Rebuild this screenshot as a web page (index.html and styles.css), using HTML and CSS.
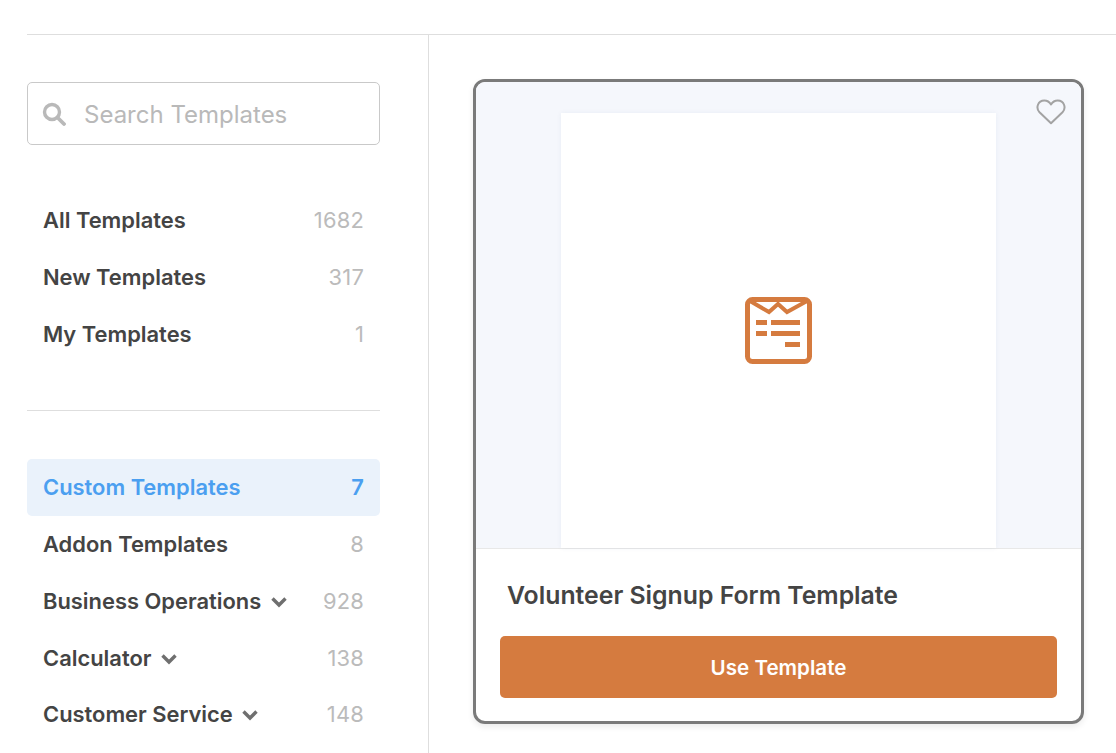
FILE: index.html
```html
<!doctype html>
<html>

<head>
    <link rel="stylesheet" href="styles.css">
</head>

<body>
    <div class="topbar"></div>
    <div class="page">
        <div class="sidebar">
            <div class="search">
                <svg class="search-icon" width="24" height="24" viewBox="0 0 24 24">
                    <circle cx="10" cy="10" r="7.5" fill="none" stroke="#b9b9b9" stroke-width="3.4" />
                    <path d="M15.5 15.5L22 22" fill="none" stroke="#b9b9b9" stroke-width="3.8" stroke-linecap="round" />
                </svg>
                <span class="search-text">Search Templates</span>
            </div>
            <div class="list list-first">
                <div class="row"><span class="name">All Templates</span><span class="num">1682</span></div>
                <div class="row"><span class="name">New Templates</span><span class="num">317</span></div>
                <div class="row"><span class="name">My Templates</span><span class="num">1</span></div>
            </div>
            <div class="list list-second">
                <div class="row active"><span class="name">Custom Templates</span><span class="num">7</span></div>
                <div class="row"><span class="name">Addon Templates</span><span class="num">8</span></div>
                <div class="row">
                    <span class="name">Business Operations
                        <svg class="chev" width="18" height="12" viewBox="0 0 18 12"><path d="M2.5 2.5L9 9l6.500-6.500" /></svg>
                    </span>
                    <span class="num">928</span>
                </div>
                <div class="row">
                    <span class="name">Calculator
                        <svg class="chev" width="18" height="12" viewBox="0 0 18 12"><path d="M2.5 2.5L9 9l6.500-6.500" /></svg>
                    </span>
                    <span class="num">138</span>
                </div>
                <div class="row">
                    <span class="name">Customer Service
                        <svg class="chev" width="18" height="12" viewBox="0 0 18 12"><path d="M2.5 2.5L9 9l6.500-6.500" /></svg>
                    </span>
                    <span class="num">148</span>
                </div>
            </div>
        </div>
        <div class="main">
            <div class="card">
                <div class="preview">
                    <div class="paper">
                        <svg width="67" height="67" viewBox="0 0 67 67">
                            <rect x="2.500" y="2.500" width="62" height="62" rx="5" fill="none" stroke="#d57b3f" stroke-width="5" />
                            <path d="M5 4l19 11 9-8 9 8 20-11" fill="none" stroke="#d57b3f" stroke-width="4" />
                            <path d="M11 23h11v5H11zM26 23h29v5H26zM11 34h11v5H11zM26 34h29v5H26zM40 45h15v5H40z" fill="#d57b3f" />
                        </svg>
                    </div>
                    <svg class="heart" width="30" height="26" viewBox="0 0 30 26">
                        <path d="M15 24.300L3.500 13.200C-.5 9 1.800 1.500 8.300 1.500c3 0 5.200 1.500 6.700 4 1.500-2.500 3.700-4 6.700-4 6.500 0 8.800 7.500 4.800 11.700z" fill="none" stroke="#a3a3a3" stroke-width="2" stroke-linejoin="round" />
                    </svg>
                </div>
                <div class="card-body">
                    <h3>Volunteer Signup Form Template</h3>
                    <div class="btn">Use Template</div>
                </div>
            </div>
        </div>
    </div>
</body>

</html>
```

FILE: styles.css
```css
body,
html {
    margin: 0;
    padding: 0;
    height: 100%;
    overflow: hidden;
    background-color: #fff;
    font-family: Inter, "Liberation Sans", sans-serif;
}

.topbar {
    height: 34px;
    margin-left: 27px;
    border-bottom: 1px solid #dedede;
}

.page {
    display: flex;
    height: 718px;
}

.sidebar {
    width: 353px;
    padding: 0 48px 0 27px;
    border-right: 1px solid #dedede;
    flex-shrink: 0;
}

.search {
    display: flex;
    align-items: center;
    height: 61px;
    margin-top: 47px;
    padding-left: 14px;
    border: 1px solid #c9c9c9;
    border-radius: 5px;
    font-size: 24px;
    color: #b9b9b9;
}

.search-icon {
    margin-right: 18px;
}

.search-text {
    margin-top: 2px;
}

.list-first {
    margin-top: 47px;
    padding-bottom: 47.750px;
    border-bottom: 1px solid #dedede;
}

.list-second {
    margin-top: 48px;
}

.row {
    display: flex;
    justify-content: space-between;
    align-items: center;
    height: 56.750px;
    padding: 0 16px;
    font-size: 21.900px;
}

.row.active {
    background-color: #eaf2fb;
    border-radius: 5px;
}

.name {
    font-weight: 600;
    color: #444;
}

.num {
    color: #bbb;
    letter-spacing: 0.2px;
}

.active .name,
.active .num {
    color: #4b9ff0;
}

.active .num {
    font-weight: 600;
}

.chev {
    margin-left: 3px;
    vertical-align: 1px;
}

.chev path {
    fill: none;
    stroke: #6f6f6f;
    stroke-width: 3.400;
}

.main {
    padding: 44px 0 0 44px;
}

.card {
    width: 605px;
    height: 639px;
    border: 3px solid #7a7a7a;
    border-radius: 12px;
    overflow: hidden;
    box-shadow: 0 3px 6px rgba(0, 0, 0, 0.08);
}

.preview {
    position: relative;
    display: flex;
    justify-content: center;
    height: 467px;
    padding-top: 31px;
    box-sizing: border-box;
    background-color: #f5f7fc;
    border-bottom: 1px solid #e8e8e8;
}

.paper {
    display: flex;
    justify-content: center;
    align-items: center;
    width: 435px;
    background-color: #fff;
    box-shadow: 0 0 5px rgba(40, 60, 120, 0.06);
}

.heart {
    position: absolute;
    top: 17px;
    right: 15px;
}

.card-body {
    padding: 0 24px;
}

h3 {
    margin: 27px 0 22px 7px;
    font-size: 24.800px;
    line-height: 38px;
    font-weight: 600;
    color: #444;
}

.btn {
    display: flex;
    justify-content: center;
    align-items: center;
    height: 62px;
    background-color: #d57b3f;
    border-radius: 5px;
    font-size: 20.600px;
    font-weight: 600;
    color: #fff;
}
```
